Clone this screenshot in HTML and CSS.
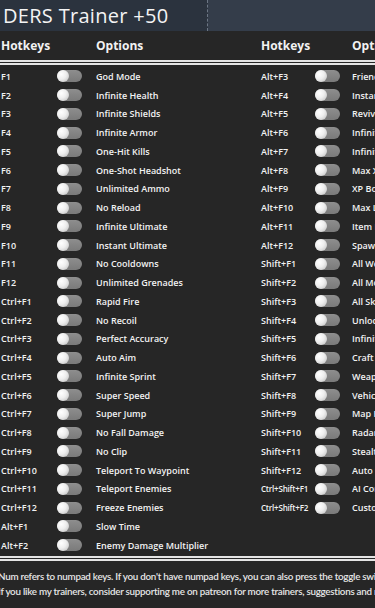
FILE: index.html
```
<!DOCTYPE html>
<html>
<head>
<meta charset="utf-8">
<link rel="stylesheet" href="styles.css">
</head>
<body>
<div class="page">
  <header class="titlebar">
    <h1 class="title">DERS Trainer +50</h1>
    <div class="title-right"></div>
  </header>
  <div class="thead">
    <div class="th th-key">Hotkeys</div>
    <div class="th th-opt">Options</div>
    <div class="th th-key2">Hotkeys</div>
    <div class="th th-opt2">Options</div>
  </div>
  <div class="tbody">
    <div class="half left">
      <div class="row"><span class="key">F1</span><span class="toggle"></span><span class="opt">God Mode</span></div>
      <div class="row"><span class="key">F2</span><span class="toggle"></span><span class="opt">Infinite Health</span></div>
      <div class="row"><span class="key">F3</span><span class="toggle"></span><span class="opt">Infinite Shields</span></div>
      <div class="row"><span class="key">F4</span><span class="toggle"></span><span class="opt">Infinite Armor</span></div>
      <div class="row"><span class="key">F5</span><span class="toggle"></span><span class="opt">One-Hit Kills</span></div>
      <div class="row"><span class="key">F6</span><span class="toggle"></span><span class="opt">One-Shot Headshot</span></div>
      <div class="row"><span class="key">F7</span><span class="toggle"></span><span class="opt">Unlimited Ammo</span></div>
      <div class="row"><span class="key">F8</span><span class="toggle"></span><span class="opt">No Reload</span></div>
      <div class="row"><span class="key">F9</span><span class="toggle"></span><span class="opt">Infinite Ultimate</span></div>
      <div class="row"><span class="key">F10</span><span class="toggle"></span><span class="opt">Instant Ultimate</span></div>
      <div class="row"><span class="key">F11</span><span class="toggle"></span><span class="opt">No Cooldowns</span></div>
      <div class="row"><span class="key">F12</span><span class="toggle"></span><span class="opt">Unlimited Grenades</span></div>
      <div class="row"><span class="key">Ctrl+F1</span><span class="toggle"></span><span class="opt">Rapid Fire</span></div>
      <div class="row"><span class="key">Ctrl+F2</span><span class="toggle"></span><span class="opt">No Recoil</span></div>
      <div class="row"><span class="key">Ctrl+F3</span><span class="toggle"></span><span class="opt">Perfect Accuracy</span></div>
      <div class="row"><span class="key">Ctrl+F4</span><span class="toggle"></span><span class="opt">Auto Aim</span></div>
      <div class="row"><span class="key">Ctrl+F5</span><span class="toggle"></span><span class="opt">Infinite Sprint</span></div>
      <div class="row"><span class="key">Ctrl+F6</span><span class="toggle"></span><span class="opt">Super Speed</span></div>
      <div class="row"><span class="key">Ctrl+F7</span><span class="toggle"></span><span class="opt">Super Jump</span></div>
      <div class="row"><span class="key">Ctrl+F8</span><span class="toggle"></span><span class="opt">No Fall Damage</span></div>
      <div class="row"><span class="key">Ctrl+F9</span><span class="toggle"></span><span class="opt">No Clip</span></div>
      <div class="row"><span class="key">Ctrl+F10</span><span class="toggle"></span><span class="opt">Teleport To Waypoint</span></div>
      <div class="row"><span class="key">Ctrl+F11</span><span class="toggle"></span><span class="opt">Teleport Enemies</span></div>
      <div class="row"><span class="key">Ctrl+F12</span><span class="toggle"></span><span class="opt">Freeze Enemies</span></div>
      <div class="row"><span class="key">Alt+F1</span><span class="toggle"></span><span class="opt">Slow Time</span></div>
      <div class="row"><span class="key">Alt+F2</span><span class="toggle"></span><span class="opt">Enemy Damage Multiplier</span></div>
    </div>
    <div class="half right">
      <div class="row"><span class="key">Alt+F3</span><span class="toggle"></span><span class="opt">Friendly Fire</span></div>
      <div class="row"><span class="key">Alt+F4</span><span class="toggle"></span><span class="opt">Instant Respawn</span></div>
      <div class="row"><span class="key">Alt+F5</span><span class="toggle"></span><span class="opt">Revive Allies</span></div>
      <div class="row"><span class="key">Alt+F6</span><span class="toggle"></span><span class="opt">Infinite Money</span></div>
      <div class="row"><span class="key">Alt+F7</span><span class="toggle"></span><span class="opt">Infinite Eridium</span></div>
      <div class="row"><span class="key">Alt+F8</span><span class="toggle"></span><span class="opt">Max XP</span></div>
      <div class="row"><span class="key">Alt+F9</span><span class="toggle"></span><span class="opt">XP Boost</span></div>
      <div class="row"><span class="key">Alt+F10</span><span class="toggle"></span><span class="opt">Max Level</span></div>
      <div class="row"><span class="key">Alt+F11</span><span class="toggle"></span><span class="opt">Item Drop Rate</span></div>
      <div class="row"><span class="key">Alt+F12</span><span class="toggle"></span><span class="opt">Spawn Legendary</span></div>
      <div class="row"><span class="key">Shift+F1</span><span class="toggle"></span><span class="opt">All Weapons</span></div>
      <div class="row"><span class="key">Shift+F2</span><span class="toggle"></span><span class="opt">All Mods</span></div>
      <div class="row"><span class="key">Shift+F3</span><span class="toggle"></span><span class="opt">All Skills</span></div>
      <div class="row"><span class="key">Shift+F4</span><span class="toggle"></span><span class="opt">Unlock All</span></div>
      <div class="row"><span class="key">Shift+F5</span><span class="toggle"></span><span class="opt">Infinite Skill Points</span></div>
      <div class="row"><span class="key">Shift+F6</span><span class="toggle"></span><span class="opt">Craft Items</span></div>
      <div class="row"><span class="key">Shift+F7</span><span class="toggle"></span><span class="opt">Weapon Mods</span></div>
      <div class="row"><span class="key">Shift+F8</span><span class="toggle"></span><span class="opt">Vehicle Boost</span></div>
      <div class="row"><span class="key">Shift+F9</span><span class="toggle"></span><span class="opt">Map Reveal</span></div>
      <div class="row"><span class="key">Shift+F10</span><span class="toggle"></span><span class="opt">Radar Hack</span></div>
      <div class="row"><span class="key">Shift+F11</span><span class="toggle"></span><span class="opt">Stealth Mode</span></div>
      <div class="row"><span class="key">Shift+F12</span><span class="toggle"></span><span class="opt">Auto Loot</span></div>
      <div class="row"><span class="key small">Ctrl+Shift+F1</span><span class="toggle"></span><span class="opt">AI Control</span></div>
      <div class="row"><span class="key small">Ctrl+Shift+F2</span><span class="toggle"></span><span class="opt">Custom Speed</span></div>
    </div>
  </div>
  <footer class="notes">
    <p class="note">Num refers to numpad keys. If you don't have numpad keys, you can also press the toggle switches to activate the options.</p>
    <p class="note">If you like my trainers, consider supporting me on patreon for more trainers, suggestions and requests!</p>
  </footer>
</div>
</body>
</html>
```
FILE: styles.css
```
* { box-sizing: border-box; }
html, body {
  margin: 0;
  padding: 0;
  background: #262626;
}
body {
  width: 375px;
  height: 608px;
  overflow: hidden;
  font-family: "Open Sans", "DejaVu Sans", sans-serif;
  color: #f2f2f2;
}
.page {
  width: 600px;
}
.titlebar {
  display: flex;
  height: 31px;
  background: #2b333e;
}
.title {
  margin: 0;
  width: 208px;
  padding: 2px 0 0 3px;
  font-size: 20px;
  font-weight: 400;
  line-height: 28px;
  letter-spacing: 0.3px;
  color: #f4f4f4;
  border-right: 1px dashed #6c7684;
  white-space: nowrap;
}
.title-right {
  flex: 1;
  background: #343d4a;
}
.thead {
  display: grid;
  grid-template-columns: 95px 165px 91px auto;
  height: 34px;
  align-items: end;
  padding: 0 0 6px 1px;
  border-bottom: 5px double #e4e4e4;
  font-size: 12px;
  font-weight: 700;
}
.tbody {
  display: grid;
  grid-template-columns: 260px auto;
  padding-top: 2px;
  height: 496px;
  border-bottom: 5px double #e4e4e4;
}
.half {
  display: flex;
  flex-direction: column;
}
.row {
  display: grid;
  height: 18.76px;
  align-items: center;
  font-size: 9px;
  font-weight: 600;
  white-space: nowrap;
}
.left .row { grid-template-columns: 56px 39px auto; padding-left: 1px; }
.right .row { grid-template-columns: 54px 37px auto; padding-left: 1px; }
.key.small { font-size: 8px; letter-spacing: -0.2px; }
.toggle {
  position: relative;
  width: 25px;
  height: 12px;
  border-radius: 6px;
  background: linear-gradient(#8e8e8e, #7a7a7a);
}
.toggle::after {
  content: "";
  position: absolute;
  left: 0;
  top: 0;
  width: 12px;
  height: 12px;
  border-radius: 50%;
  background: radial-gradient(circle at 35% 35%, #ffffff 0%, #eeeeee 45%, #b9b9b9 100%);
}
.notes {
  padding: 8px 0 0 0;
  margin-left: -2px;
}
.note {
  margin: 0;
  font-family: "Lato", "Open Sans", sans-serif;
  font-size: 9.8px;
  font-weight: 600;
  letter-spacing: -0.25px;
  line-height: 15px;
  color: #e6e6e6;
  white-space: nowrap;
}
```
